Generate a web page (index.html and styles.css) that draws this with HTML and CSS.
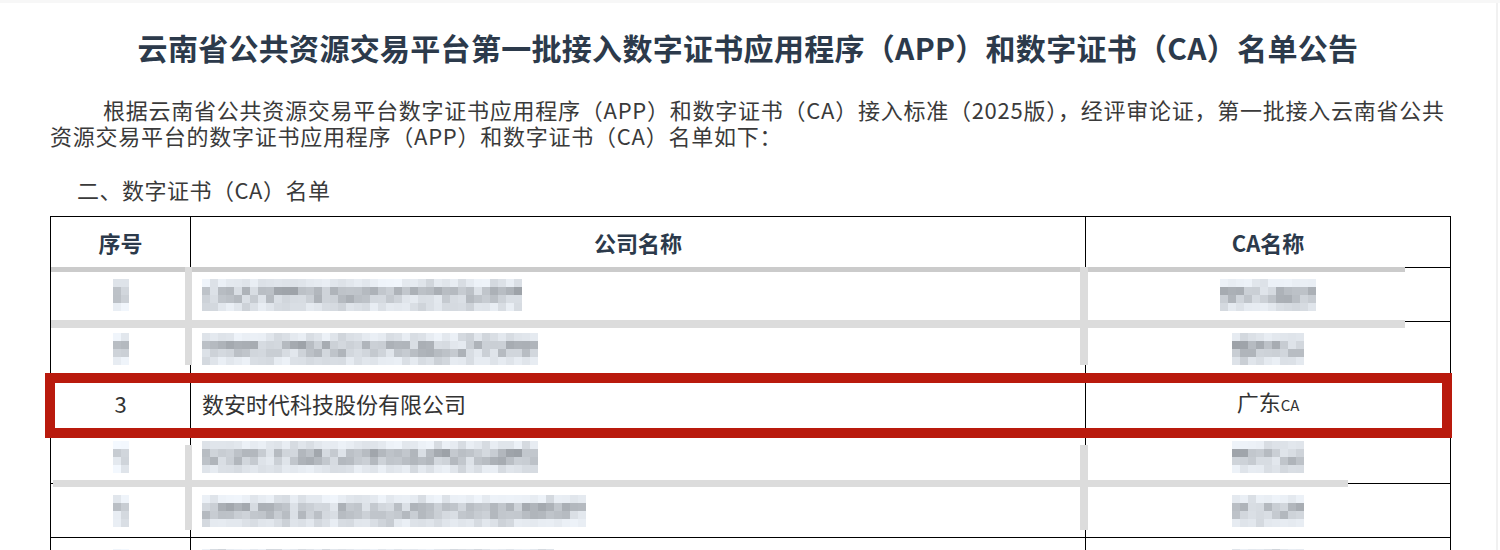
FILE: index.html
```html
<!DOCTYPE html>
<html lang="zh-CN">
<head>
<meta charset="utf-8">
<title>名单公告</title>
<link rel="stylesheet" href="styles.css">
</head>
<body>
<div class="page">
  <h1 class="title">云南省公共资源交易平台第一批接入数字证书应用程序（APP）和数字证书（CA）名单公告</h1>
  <p class="intro">根据云南省公共资源交易平台数字证书应用程序（APP）和数字证书（CA）接入标准（2025版），经评审论证，第一批接入云南省公共<br>资源交易平台的数字证书应用程序（APP）和数字证书（CA）名单如下：</p>
  <h2 class="section">二、数字证书（CA）名单</h2>
  <div class="table-wrap">
    <table class="ca-table">
      <colgroup><col class="c-no"><col class="c-co"><col class="c-ca"></colgroup>
      <thead>
        <tr><th>序号</th><th>公司名称</th><th>CA名称</th></tr>
      </thead>
      <tbody>
        <tr><td class="center"><span class="mosaic" data-cols="2" data-seed="11"></span></td><td><span class="mosaic" data-cols="40" data-seed="12"></span></td><td class="center"><span class="mosaic" data-cols="12" data-seed="13"></span></td></tr>
        <tr><td class="center"><span class="mosaic" data-cols="2" data-seed="21"></span></td><td><span class="mosaic" data-cols="42" data-seed="22"></span></td><td class="center"><span class="mosaic" data-cols="9" data-seed="23"></span></td></tr>
        <tr><td class="center">3</td><td>数安时代科技股份有限公司</td><td class="center">广东<span class="small">CA</span></td></tr>
        <tr><td class="center"><span class="mosaic" data-cols="2" data-seed="41"></span></td><td><span class="mosaic" data-cols="42" data-seed="42"></span></td><td class="center"><span class="mosaic" data-cols="9" data-seed="43"></span></td></tr>
        <tr><td class="center"><span class="mosaic" data-cols="2" data-seed="51"></span></td><td><span class="mosaic" data-cols="48" data-seed="52"></span></td><td class="center"><span class="mosaic" data-cols="9" data-seed="53"></span></td></tr>
        <tr><td class="center"><span class="mosaic" data-cols="2" data-seed="61"></span></td><td><span class="mosaic" data-cols="44" data-seed="62"></span></td><td class="center"><span class="mosaic" data-cols="9" data-seed="63"></span></td></tr>
      </tbody>
    </table>
    <div class="band band-h1"></div>
    <div class="band band-h2"></div>
    <div class="band band-v1"></div>
    <div class="band band-v2"></div>
    <div class="band band-h3"></div>
    <div class="band band-v3"></div>
    <div class="band band-v4"></div>
    <div class="highlight"></div>
  </div>
</div>
<script src="script.js"></script>
</body>
</html>
```

FILE: styles.css
```css
html, body {
  margin: 0;
  padding: 0;
  height: 550px;
  overflow: hidden;
  background: #ffffff;
}
body {
  font-family: "Noto Sans CJK SC", "Microsoft YaHei", sans-serif;
  color: #333333;
  border-top: 3px solid #f7f7f7;
  box-sizing: border-box;
}
.page {
  padding: 24px 50px 0 50px;
  border-right: 2px solid #f1f1f1;
  width: 1498px;
  box-sizing: border-box;
  height: 547px;
}
.title {
  margin: 0;
  font-size: 30px;
  line-height: 40px;
  font-weight: 700;
  text-align: center;
  color: #2c3a4b;
  letter-spacing: 0.3px;
}
.intro {
  margin: 29px 0 0 0;
  font-size: 22px;
  line-height: 26px;
  text-indent: 53px;
  letter-spacing: 0.75px;
  color: #3a3a3a;
  white-space: nowrap;
}
.section {
  margin: 28px 0 0 27px;
  font-size: 22px;
  line-height: 26px;
  font-weight: 400;
  color: #3a3a3a;
  letter-spacing: 0.5px;
}
.table-wrap {
  position: relative;
  margin-top: 14px;
  width: 1400px;
}
.ca-table {
  width: 1400px;
  table-layout: fixed;
  border-collapse: collapse;
  font-size: 22px;
  color: #333333;
}
.c-no { width: 140px; }
.c-co { width: 895px; }
.c-ca { width: 365px; }
.ca-table th,
.ca-table td {
  border: 1px solid #000000;
  padding: 0 11px;
  line-height: 26px;
  vertical-align: middle;
}
.ca-table thead tr { height: 51px; }
.ca-table tbody tr { height: 54px; }
.ca-table th {
  font-weight: 700;
  text-align: center;
  color: #2c3a4b;
}
.ca-table td { text-align: left; }
.ca-table td.center { text-align: center; }
.small {
  font-size: 15px;
  letter-spacing: 0;
}
.mosaic {
  display: inline-grid;
  grid-auto-flow: row;
  grid-template-rows: repeat(4, 8px);
  vertical-align: middle;
  line-height: 0;
}
.mosaic i {
  display: block;
  width: 8px;
  height: 8px;
}
.band {
  position: absolute;
  background: #dcdcdc;
}
.band-h1 { left: 1px; top: 51px; width: 1354px; height: 5px; background: #cbcbcb; }
.band-h2 { left: 1px; top: 104px; width: 1354px; height: 8px; }
.band-v1 { left: 135px; top: 51px; width: 7px; height: 98px; }
.band-v2 { left: 1030px; top: 51px; width: 8px; height: 98px; }
.band-h3 { left: 3px; top: 264px; width: 1295px; height: 7px; }
.band-v3 { left: 135px; top: 229px; width: 7px; height: 85px; }
.band-v4 { left: 1030px; top: 229px; width: 8px; height: 85px; }
.highlight {
  position: absolute;
  left: -5px;
  top: 157px;
  width: 1407px;
  height: 65px;
  box-sizing: border-box;
  border: 10px solid #b91a0d;
}
```

FILE: script.js
```js
(function () {
  function rng(seed) {
    var a = seed >>> 0;
    return function () {
      a = (a + 0x6D2B79F5) >>> 0;
      var t = a;
      t = Math.imul(t ^ (t >>> 15), t | 1);
      t ^= t + Math.imul(t ^ (t >>> 7), t | 61);
      return ((t ^ (t >>> 14)) >>> 0) / 4294967296;
    };
  }
  var ranges = [[226, 248], [158, 222], [170, 228], [216, 244]];
  var list = document.querySelectorAll('.mosaic');
  list.forEach(function (el) {
    var cols = parseInt(el.getAttribute('data-cols'), 10);
    var r = rng(parseInt(el.getAttribute('data-seed'), 10) * 7919);
    var narrow = cols <= 2;
    el.style.gridTemplateColumns = 'repeat(' + cols + ', 8px)';
    var prev = [];
    for (var row = 0; row < 4; row++) {
      for (var c = 0; c < cols; c++) {
        var lo = ranges[row][0], hi = ranges[row][1];
        if (narrow) { lo += 18; hi = Math.min(250, hi + 12); }
        var v = Math.round(lo + r() * (hi - lo));
        if ((row === 0 || row === 3) && r() < 0.18) v -= 18;
        if ((row === 1 || row === 2) && r() < 0.1) v = 236;
        if (c > 0 && prev[c - 1] !== undefined) v = Math.round(v * 0.75 + prev[c - 1] * 0.25);
        prev[c] = v;
        var cell = document.createElement('i');
        cell.style.background = 'rgb(' + (v - 6) + ',' + (v - 1) + ',' + Math.min(255, v + 5) + ')';
        el.appendChild(cell);
      }
    }
  });
})();
```
